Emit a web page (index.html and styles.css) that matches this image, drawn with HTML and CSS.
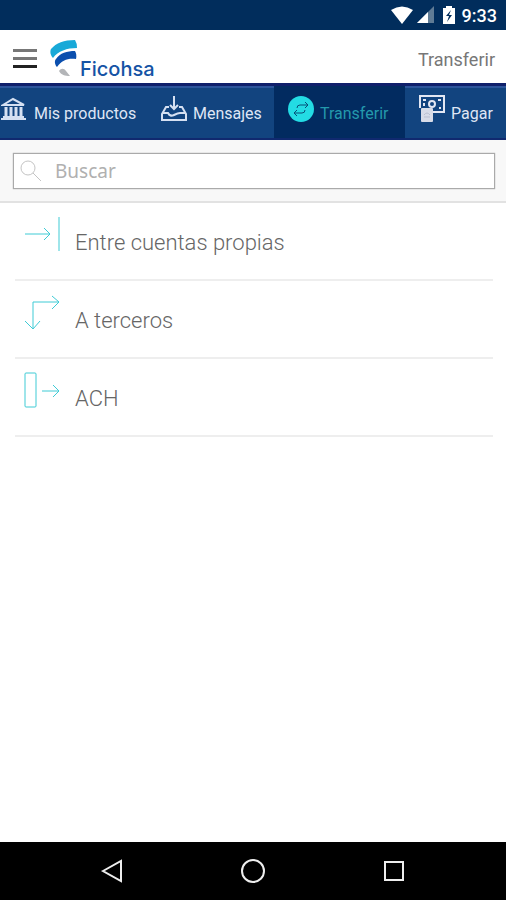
FILE: index.html
```html
<!DOCTYPE html>
<html lang="es">
<head>
    <meta charset="UTF-8">
    <meta name="viewport" content="width=device-width, initial-scale=1.0">
    <title>Ficohsa - Transferir</title>
    <link rel="stylesheet" href="styles.css">
</head>
<body>
    <div class="status-bar">
        <svg width="22" height="18" viewBox="0 0 22 18"><path d="M0 4Q11-3 22 4L11 18Z" fill="#fff"/></svg>
        <svg width="18" height="18" viewBox="0 0 18 18"><path d="M18 0V17H1Z" fill="#5f7b95"/><path d="M12 6V17H1Z" fill="#fff"/></svg>
        <svg class="battery" width="12" height="18" viewBox="0 0 12 18"><path d="M3 2V0H9V2H12V18H0V2Z" fill="#fff"/><path d="M8 4L3 10H6L4 16L9 9H6Z" fill="#012d5c"/></svg>
        <span class="clock">9:33</span>
    </div>

    <header class="header">
        <button class="menu-button" type="button" aria-label="Menú">
            <span></span>
            <span></span>
            <span></span>
        </button>
        <a class="logo" href="#">
            <svg width="28" height="38" viewBox="0 0 28 38">
                <path d="M3 18C0 15 0 11 1 9C6 3 14 0 25 0Q27 3 27 8C17 8 8 11 3 18Z" fill="#18a9d8"/>
                <path d="M7 27C5 25 4 21 6 19C10 13 17 11 25 11Q27 14 26 19C18 18 12 20 7 27Z" fill="#0b4fae"/>
                <path d="M9 31C11 28 14 28 16 31L20 36C15 36 11 35 9 31Z" fill="#b3b5b8"/>
            </svg>
            <span class="logo-text">Ficohsa</span>
        </a>
        <h1>Transferir</h1>
    </header>

    <nav class="tabs">
        <a href="#">
            <svg width="25" height="28" viewBox="0 0 25 28" fill="none" stroke="#d5e0f2" stroke-width="2">
                <path d="M2 10L12 4L23 10Z"/>
                <path d="M5 12V22M10 12V22M15 12V22M20 12V22" stroke-width="3"/>
                <path d="M2 22H23M0 24H25"/>
            </svg>
            <span>Mis productos</span>
        </a>
        <a href="#">
            <svg width="26" height="28" viewBox="0 0 26 28" fill="none" stroke="#d5e0f2" stroke-width="2">
                <path d="M13 1V14M9 10L13 14L17 10"/>
                <path d="M8 12H5L1 19V25H25V19L21 12H18M1 18H7Q9 22 13 20T19 18H25"/>
            </svg>
            <span>Mensajes</span>
        </a>
        <a class="active" href="#">
            <svg width="26" height="28" viewBox="0 0 26 28">
                <circle cx="13" cy="14" r="13" fill="#23dce4"/>
                <path d="M9 13Q9 10 12 10H20M17 7L20 10L17 13M17 15Q17 18 14 18H6M9 15L6 18L9 21" fill="none" stroke="#075079"/>
            </svg>
            <span>Transferir</span>
        </a>
        <a href="#">
            <svg width="26" height="28" viewBox="0 0 26 28">
                <path d="M1 13V1H25V17H14" fill="none" stroke="#e3e7f3" stroke-width="2"/>
                <path d="M4 4H7V6H4ZM19 4H22V6H19ZM4 8H6V11H4ZM20 12H22V14H20Z" fill="#e3e7f3"/>
                <circle cx="13" cy="9" r="3" fill="none" stroke="#e3e7f3" stroke-width="2"/>
                <rect x="2" y="13" width="12" height="14" rx="1" fill="#d8dce8"/>
                <path d="M5 20Q8 16 11 20M5 22H11" fill="none" stroke="#b9bfd0"/>
            </svg>
            <span>Pagar</span>
        </a>
    </nav>

    <form class="search">
        <label class="search-box">
            <svg width="22" height="22" viewBox="0 0 22 22" fill="none" stroke="#c4c4c4"><circle cx="8" cy="8" r="7"/><path d="M13 13L21 21"/></svg>
            <input type="text" placeholder="Buscar" aria-label="Buscar">
        </label>
    </form>

    <main>
        <ul class="options">
            <li>
                <a href="#">
                    <svg width="36" height="36" viewBox="0 0 36 36"><path d="M1 18H26M20 12L26 18L20 24M35 1V35"/></svg>
                    <span>Entre cuentas propias</span>
                </a>
            </li>
            <li>
                <a href="#">
                    <svg width="36" height="36" viewBox="0 0 36 36"><path d="M9 35V8H35M28 2L35 8L28 15M1 27L9 35L16 27"/></svg>
                    <span>A terceros</span>
                </a>
            </li>
            <li>
                <a href="#">
                    <svg width="36" height="36" viewBox="0 0 36 36"><rect x="1" y="1" width="11" height="34" rx="1"/><path d="M18 19H35M29 13L35 19L29 25"/></svg>
                    <span>ACH</span>
                </a>
            </li>
        </ul>
    </main>

    <footer class="system-nav">
        <button type="button" aria-label="Atrás">
            <svg width="24" height="24" viewBox="0 0 24 24"><path d="M3 12L21 2V22Z"/></svg>
        </button>
        <button type="button" aria-label="Inicio">
            <svg width="24" height="24" viewBox="0 0 24 24"><circle cx="12" cy="12" r="11"/></svg>
        </button>
        <button type="button" aria-label="Recientes">
            <svg width="24" height="24" viewBox="0 0 24 24"><rect x="3" y="3" width="18" height="18"/></svg>
        </button>
    </footer>
</body>
</html>
```

FILE: styles.css
```css
* {
    box-sizing: border-box;
}
body {
    margin: 0;
    min-height: 100vh;
    display: flex;
    flex-direction: column;
    background-color: #fff;
    font-family: Roboto, "Liberation Sans", sans-serif;
    color: #666;
}
svg {
    flex: none;
    display: block;
}
a {
    color: inherit;
    text-decoration: none;
}
button {
    background: none;
    border: none;
    padding: 0;
    cursor: pointer;
}
.status-bar {
    height: 30px;
    display: flex;
    align-items: center;
    justify-content: flex-end;
    gap: 3px;
    padding: 0 9px;
    background-color: #012d5c;
    color: #fff;
}
.battery {
    margin: 0 4px 0 6px;
}
.clock {
    font-size: 18px;
    font-weight: 500;
}
.header {
    height: 53px;
    display: flex;
    align-items: center;
    padding: 4px 11px 0 13px;
}
.menu-button {
    width: 24px;
    display: flex;
    flex-direction: column;
    gap: 5px;
}
.menu-button span {
    height: 3px;
    background-color: #777;
}
.menu-button span:last-child {
    background-color: #222;
}
.logo {
    display: flex;
    align-items: flex-end;
    gap: 2px;
    margin-left: 13px;
    color: #1553a5;
}
.logo-text {
    font-family: Inter, sans-serif;
    font-size: 20px;
    font-weight: 500;
    line-height: 18px;
}
.header h1 {
    margin: 0 0 0 auto;
    padding-top: 2px;
    font-size: 18px;
    font-weight: 400;
    color: #777;
}
.tabs {
    height: 57px;
    display: grid;
    grid-template-columns: 147fr 127fr 131fr 101fr;
    border-top: 3px solid #10206b;
    border-bottom: 2px solid #10296f;
    background-color: #12447f;
    color: #dfe6f5;
    font-size: 16px;
    white-space: nowrap;
    overflow: hidden;
}
.tabs a {
    display: flex;
    align-items: center;
    gap: 6px;
    padding-left: 14px;
    border-top: 2px solid #2d559b;
}
.tabs a:first-child {
    gap: 8px;
    padding-left: 1px;
}
.tabs svg {
    margin-bottom: 8px;
}
.tabs .active {
    border-top-color: #022b60;
    background-color: #022b60;
    color: #2499ac;
}
.search {
    padding: 13px 11px 12px 13px;
    background-color: #f8f8f8;
    border-bottom: 2px solid #e2e2e2;
}
.search-box {
    height: 36px;
    display: flex;
    align-items: center;
    gap: 13px;
    padding: 0 6px;
    background-color: #fff;
    border: 1px solid #aaa;
    box-shadow: 0 0 1px #999;
}
.search-box input {
    flex: 1;
    min-width: 0;
    padding: 0;
    border: none;
    outline: none;
    background: none;
    color: #666;
    font-family: "Noto Sans", sans-serif;
    font-size: 19px;
}
.search-box input::placeholder {
    color: #b0b0b0;
}
.options {
    list-style: none;
    margin: 0;
    padding: 0 13px 0 15px;
}
.options li {
    border-bottom: 2px solid #eee;
}
.options a {
    height: 76px;
    display: flex;
    gap: 15px;
    padding: 13px 0 0 9px;
    font-size: 22px;
    font-weight: 300;
}
.options span {
    padding-top: 14px;
    line-height: 26px;
}
.options svg {
    fill: none;
    stroke: #3fcbd5;
}
.system-nav {
    height: 58px;
    display: flex;
    align-items: center;
    justify-content: space-around;
    margin-top: auto;
    padding: 0 41px;
    background-color: #000;
}
.system-nav svg {
    fill: none;
    stroke: #eee;
    stroke-width: 2;
}
```
